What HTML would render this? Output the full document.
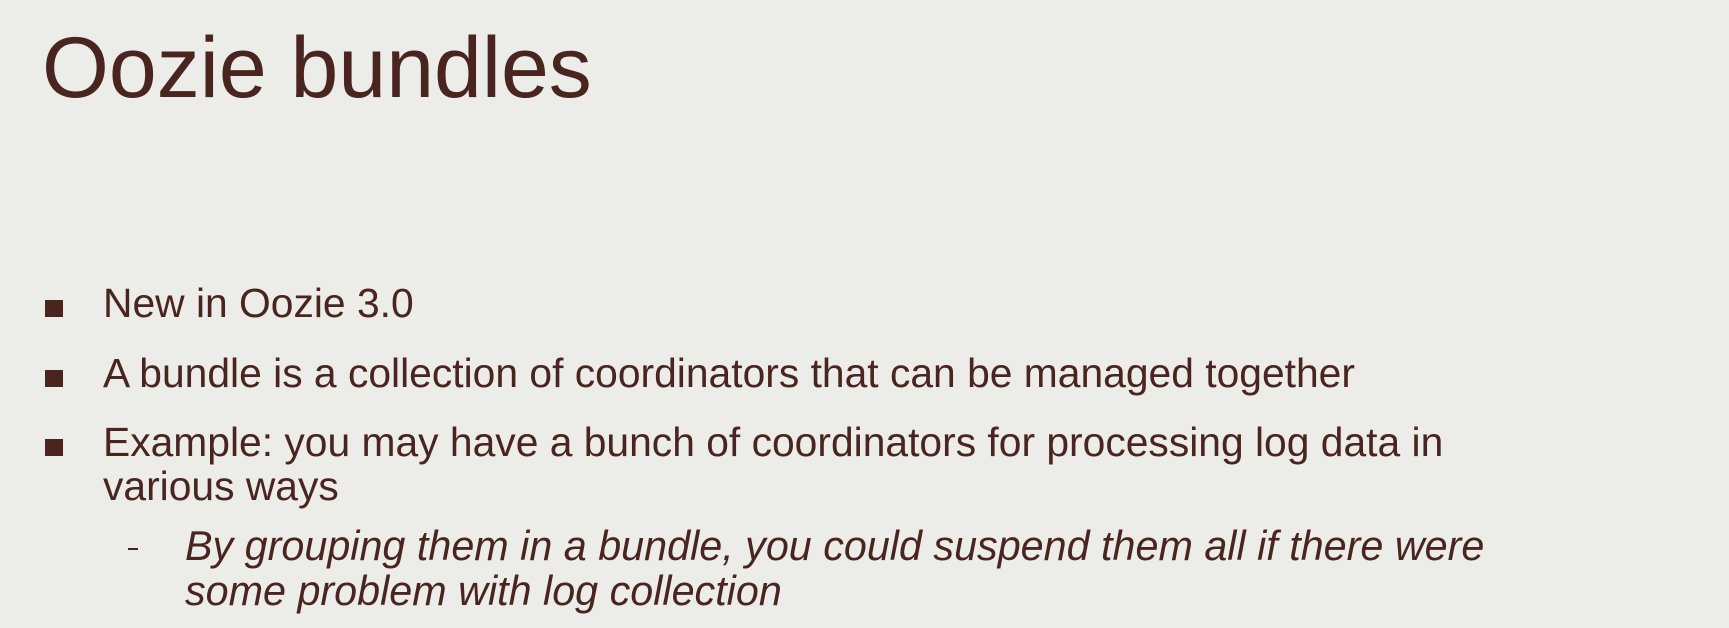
<!DOCTYPE html>
<html><head><meta charset="utf-8"><style>
html,body{margin:0;padding:0}
body{width:1729px;height:628px;background:#ecece9;position:relative;overflow:hidden;font-family:"Liberation Sans",sans-serif;color:#4a2520}
.t{position:absolute;left:42px;top:17px;font-size:86px;line-height:1.2;white-space:nowrap}
.l{position:absolute;left:103px;font-size:40.8px;white-space:nowrap;line-height:45px}
.b{position:absolute;left:45px;width:18px;height:17px;background:#4a2520}
.i{font-style:italic;left:185px;font-size:41.3px}
.d{position:absolute;left:128px;top:530px;width:10px;height:2px;background:#4a2520}
</style></head><body>
<div class="t">Oozie bundles</div>
<div class="b" style="top:300px"></div><div class="l" style="top:281px">New in Oozie 3.0</div>
<div class="b" style="top:370px"></div><div class="l" style="top:351px">A bundle is a collection of coordinators that can be managed together</div>
<div class="b" style="top:439px"></div><div class="l" style="top:420px">Example: you may have a bunch of coordinators for processing log data in</div>
<div class="l" style="top:464px">various ways</div>
<div class="d" style="top:548px"></div>
<div class="l i" style="top:524px">By grouping them in a bundle, you could suspend them all if there were</div>
<div class="l i" style="top:569px">some problem with log collection</div>
</body></html>
